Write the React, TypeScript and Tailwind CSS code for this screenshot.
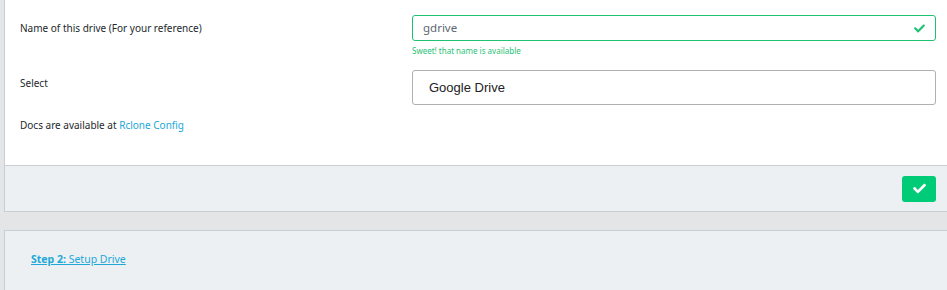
import { FaCheck } from 'react-icons/fa';

const font = { fontFamily: '"Noto Sans", "Liberation Sans", sans-serif' };

export default function App() {
  return (
    <div className="h-[290px] w-[947px] overflow-hidden bg-[#e4e5e6] pl-[4px] text-[#23282c]" style={font}>
      <div className="border-b border-l border-[#c8ced3] bg-white">
        <div className="flex flex-col pb-[27px] pl-[15px] pr-[11px] pt-[15px] text-[10px]">
          <div className="flex">
            <div className="flex h-[26px] w-[392px] items-center">Name of this drive (For your reference)</div>
            <div className="flex-1">
              <div className="flex h-[26px] items-center rounded-[3px] border border-[#1fc274] pl-[10px] pr-[10px] text-[11.5px] text-[#5c6873]">
                <span className="flex-1">gdrive</span>
                <FaCheck className="text-[#1fc274]" size={11} />
              </div>
              <div className="mt-[5px] text-[8px] leading-[10px] text-[#1fc274]">Sweet! that name is available</div>
            </div>
          </div>
          <div className="mt-[14px] flex">
            <div className="flex h-[26px] w-[392px] items-center">Select</div>
            <div className="flex h-[35px] flex-1 items-center rounded-[3px] border border-[#b0b0b0] pl-[16px] text-[13px] text-[#222]" style={{ fontFamily: '"Liberation Sans", Arial, sans-serif' }}>
              Google Drive
            </div>
          </div>
          <div className="mt-[7px] flex h-[26px] items-center">
            Docs are available at&nbsp;<a className="text-[#20a8d8]" href="#">Rclone Config</a>
          </div>
        </div>
        <div className="flex h-[46px] items-center justify-end border-t border-[#c8ced3] bg-[#edf0f3] pr-[11px]">
          <button className="flex h-[26px] w-[34px] items-center justify-center rounded-[3px] bg-[#00cc77] text-white">
            <FaCheck size={13} />
          </button>
        </div>
      </div>
      <div className="mt-[18px] h-[60px] border-l border-t border-[#c8ced3] bg-[#edf0f3] pl-[26px] pt-[14px]">
        <a className="text-[10.5px] text-[#20a8d8] underline" href="#">
          <span className="font-bold">Step 2:</span> Setup Drive
        </a>
      </div>
    </div>
  );
}
